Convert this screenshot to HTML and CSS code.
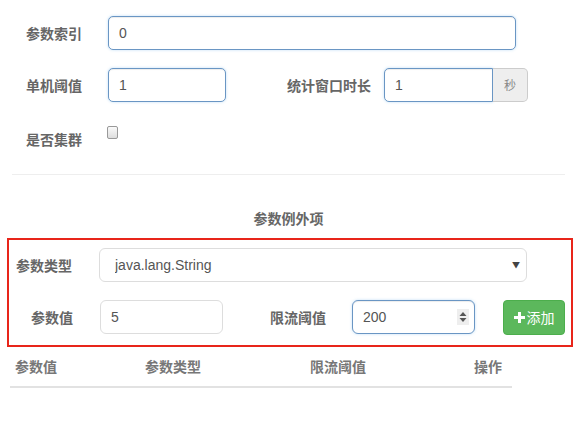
FILE: index.html
```html
<!doctype html>
<html lang="zh">
  <head>
    <meta charset="utf-8">
    <meta name="viewport" content="width=device-width, initial-scale=1">
    <title>参数规则</title>
    <link rel="stylesheet" href="styles.css">
  </head>
  <body>
    <div class="form">
      <div class="row">
        <label class="label">参数索引</label>
        <input class="field wide focus" type="text" value="0">
      </div>
      <div class="row">
        <label class="label">单机阈值</label>
        <input class="field short focus" type="text" value="1">
        <label class="label2">统计窗口时长</label>
        <div class="group">
          <input class="field grp focus" type="text" value="1">
          <span class="addon">秒</span>
        </div>
      </div>
      <div class="row check-row">
        <label class="label">是否集群</label>
        <input class="check" type="checkbox">
      </div>

      <hr class="line">

      <div class="title">参数例外项</div>

      <div class="item-box">
        <div class="row inner">
          <label class="label3">参数类型</label>
          <div class="select-wrap">
            <select class="field select">
              <option>java.lang.String</option>
            </select>
            <span class="caret">&#9660;</span>
          </div>
        </div>
        <div class="row inner second">
          <label class="label3">参数值</label>
          <input class="field param" type="text" value="5">
          <label class="label4">限流阈值</label>
          <div class="num-wrap">
            <input class="field num focus" type="text" value="200">
            <span class="spin">
              <svg width="8" height="12" viewBox="0 0 8 12"><path d="M4 1 L7.5 5 L0.5 5 Z M0.5 7 L7.5 7 L4 11 Z" fill="#555"/></svg>
            </span>
          </div>
          <button class="btn-add">
            <svg width="11" height="11" viewBox="0 0 11 11"><path d="M5.5 0 V11 M0 5.5 H11" stroke="#fff" stroke-width="3"/></svg>添加
          </button>
        </div>
      </div>

      <div class="table-head">
        <span class="col c1">参数值</span>
        <span class="col c2">参数类型</span>
        <span class="col c3">限流阈值</span>
        <span class="col c4">操作</span>
      </div>
    </div>
  </body>
</html>
```

FILE: styles.css
```css
body {
  margin: 0;
  background: #fff;
  font-family: "Noto Sans CJK SC", "Liberation Sans", sans-serif;
  font-size: 14px;
  color: #555;
}
.form {
  padding-top: 16px;
  width: 577px;
}
.row {
  display: flex;
  align-items: center;
  height: 34px;
  margin-bottom: 18px;
}
.label {
  width: 82px;
  padding-left: 26px;
  font-weight: bold;
  color: #666;
}
.label2 {
  margin-left: 61px;
  width: 97px;
  font-weight: bold;
  color: #666;
}
.field {
  box-sizing: border-box;
  height: 34px;
  padding: 6px 10px;
  border: 1px solid #ccc;
  border-radius: 5px;
  font-family: "Liberation Sans", sans-serif;
  font-size: 14px;
  color: #555;
  background: #fff;
  outline: none;
}
.focus {
  border-color: #6a96c4;
  box-shadow: inset 0 1px 1px rgba(0, 0, 0, .075), 0 0 3px rgba(102, 175, 233, .4);
}
.wide {
  width: 408px;
}
.short {
  width: 118px;
}
.group {
  display: flex;
}
.grp {
  width: 109px;
  border-radius: 5px 0 0 5px;
}
.addon {
  box-sizing: border-box;
  width: 35px;
  height: 34px;
  line-height: 32px;
  text-align: center;
  background: #eee;
  border: 1px solid #ccc;
  border-left: 0;
  border-radius: 0 5px 5px 0;
  color: #888;
  font-size: 12px;
}
.check-row {
  height: 37px;
  align-items: flex-start;
  margin-bottom: 0;
}
.check-row .label {
  padding-top: 9px;
}
.check {
  -webkit-appearance: none;
  appearance: none;
  box-sizing: border-box;
  width: 11px;
  height: 13px;
  margin: 6px 0 0 -1px;
  border: 1px solid #999;
  border-radius: 2px;
  background: linear-gradient(#fafafa, #ddd);
}
.line {
  margin: 17px 12px 0 12px;
  border: 0;
  border-top: 1px solid #eee;
}
.title {
  text-align: center;
  font-weight: bold;
  color: #666;
  margin-top: 33px;
  height: 20px;
  line-height: 20px;
}
.item-box {
  box-sizing: border-box;
  margin: 10px 0 0 7px;
  width: 566px;
  height: 109px;
  border: 2px solid #e8251a;
  padding-top: 8px;
}
.inner {
  margin-bottom: 18px;
}
.label3 {
  box-sizing: border-box;
  width: 63px;
  text-align: right;
  font-weight: bold;
  color: #666;
  margin-right: 27px;
}
.select-wrap {
  position: relative;
}
.select {
  -webkit-appearance: none;
  appearance: none;
  width: 428px;
  padding-left: 15px;
  border-color: #ddd;
  border-radius: 6px;
}
.caret {
  position: absolute;
  right: 7px;
  top: 11px;
  font-size: 8px;
  color: #444;
}
.second .label3 {
  width: 64px;
  margin-right: 27px;
}
.param {
  width: 123px;
  border-color: #ddd;
  border-radius: 6px;
}
.label4 {
  margin-left: 47px;
  width: 82px;
  font-weight: bold;
  color: #666;
}
.num-wrap {
  position: relative;
}
.num {
  width: 123px;
  border-radius: 6px;
}
.spin {
  position: absolute;
  right: 6px;
  top: 9px;
  width: 12px;
  height: 16px;
  background: #eee;
  display: flex;
  align-items: center;
  justify-content: center;
}
.btn-add {
  margin-left: 28px;
  height: 35px;
  width: 62px;
  border: 1px solid #4cae4c;
  border-radius: 4px;
  background: #5cb85c;
  color: #fff;
  font-family: "Noto Sans CJK SC", sans-serif;
  font-size: 14px;
  display: flex;
  align-items: center;
  justify-content: center;
  gap: 2px;
  padding: 0;
}
.table-head {
  position: relative;
  margin: 6px 0 0 10px;
  width: 502px;
  height: 33px;
  border-bottom: 2px solid #e2e2e2;
  font-weight: bold;
  color: #777;
}
.col {
  position: absolute;
  top: 3px;
}
.c1 { left: 5px; }
.c2 { left: 135px; }
.c3 { left: 300px; }
.c4 { left: 464px; }
```
